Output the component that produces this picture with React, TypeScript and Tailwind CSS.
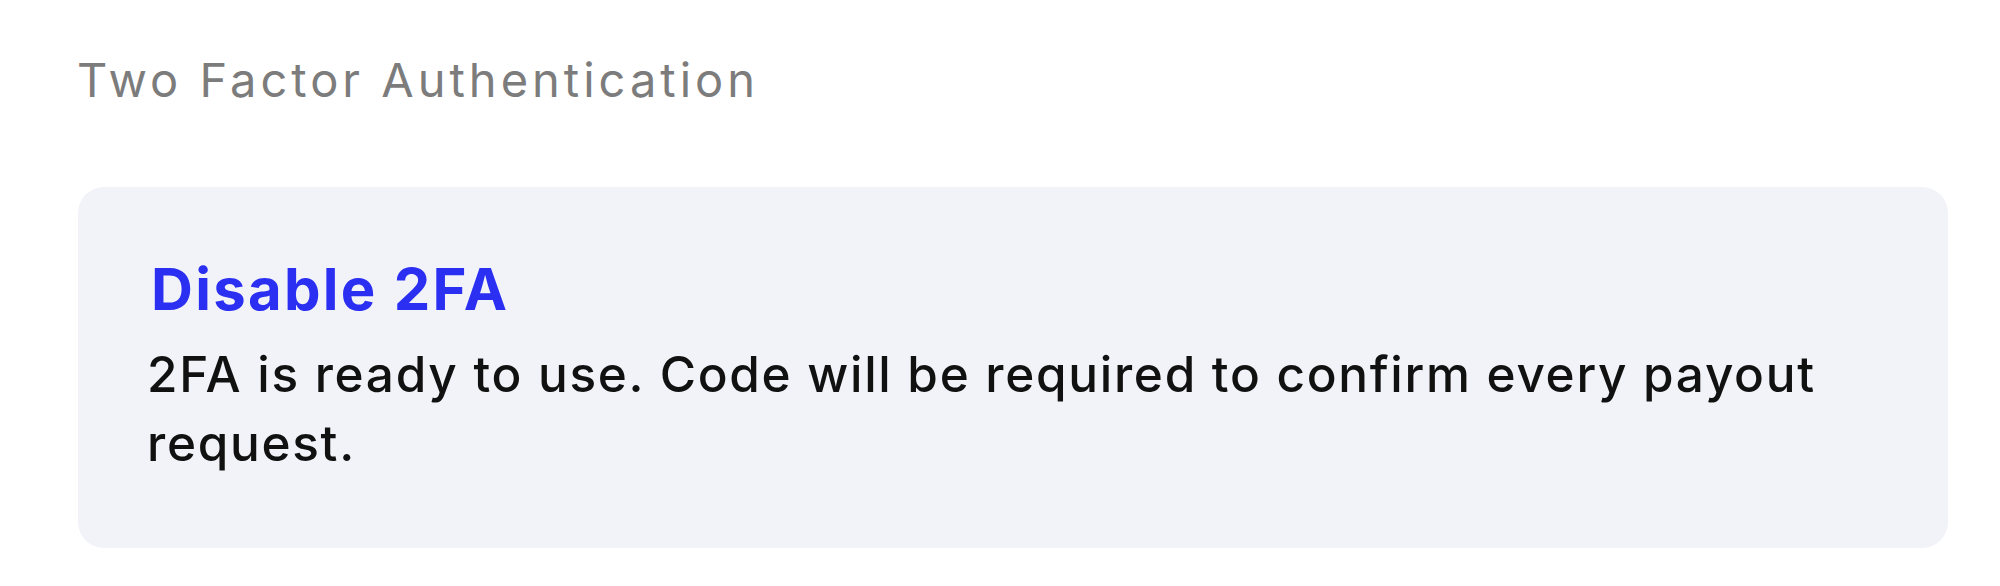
export default function App() {
  return (
    <div className="min-h-[586px] w-[2000px] bg-white pt-[56px] pl-[77px]" style={{ fontFamily: 'Inter, "Noto Sans", sans-serif' }}>
      <h2 className="text-[47px] leading-[47px] font-normal tracking-[4px] text-[#7c7c7c]">Two Factor Authentication</h2>

      <div className="mt-[84px] ml-[1px] w-[1870px] rounded-[26px] bg-[#f2f3f8] pt-[73px] pb-[70px] px-[69px]">
        <h3 className="ml-[4px] text-[58px] leading-[58px] font-bold tracking-[2.3px] text-[#2b2ff2]">Disable 2FA</h3>
        <p className="mt-[22px] text-[49.5px] leading-[69px] font-medium tracking-[1.7px] text-[#111111]">
          2FA is ready to use. Code will be required to confirm every payout request.
        </p>
      </div>
    </div>
  );
}
